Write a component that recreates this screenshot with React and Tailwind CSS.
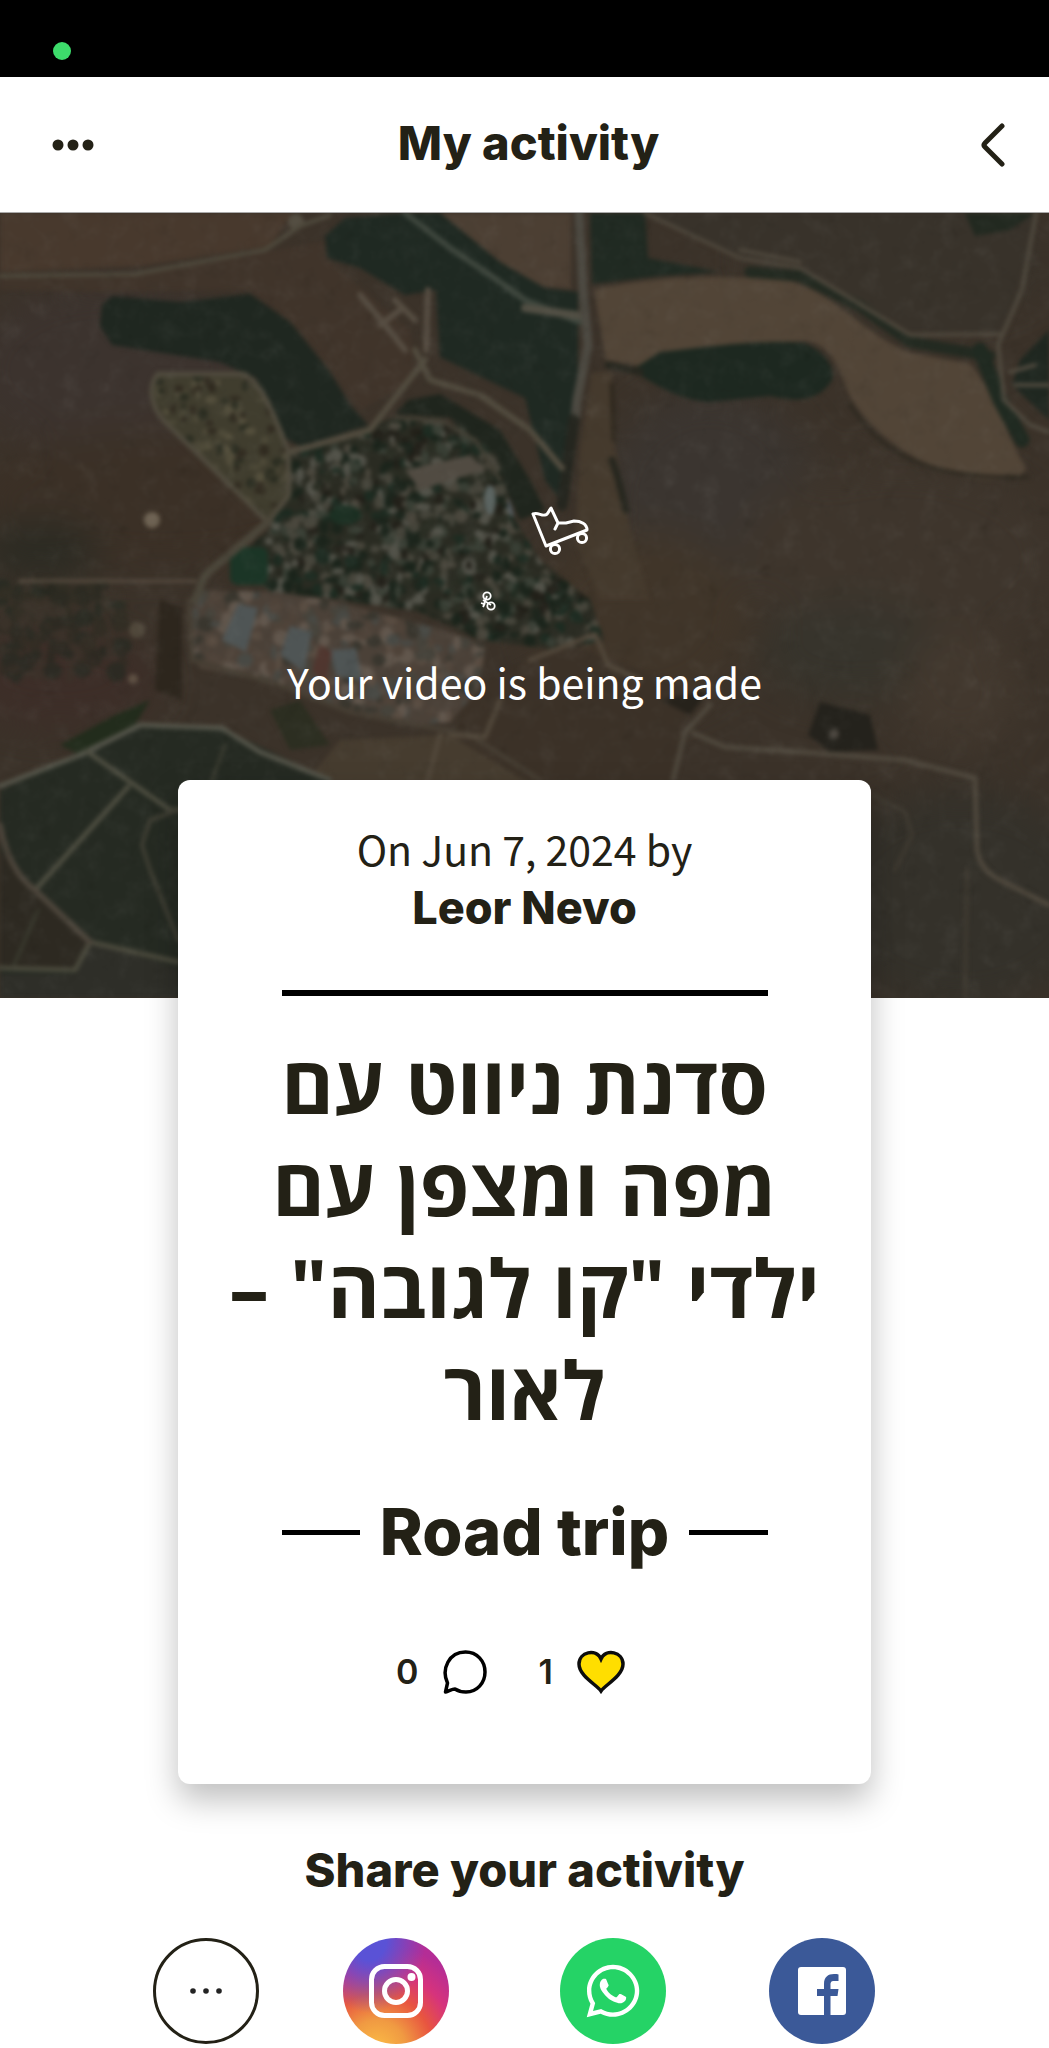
import { FaWhatsapp } from 'react-icons/fa'

// small seeded generator so the rooftops stay put between renders
function makeRandom(seed) {
  let s = seed
  return () => {
    s = (s * 16807) % 2147483647
    return s / 2147483647
  }
}

function scatter(seed, count, box, colors, size) {
  const rnd = makeRandom(seed)
  return Array.from({ length: count }, () => ({
    x: Math.round(box[0] + rnd() * box[2]),
    y: Math.round(box[1] + rnd() * box[3]),
    rx: Math.round(size * (0.5 + rnd())),
    ry: Math.round(size * (0.5 + rnd())),
    fill: colors[Math.floor(rnd() * colors.length)],
  }))
}

const town = ['#19241b', '#19241b', '#1c2c21', '#211f18', '#2b2e24', '#4c4a40', '#514d42', '#3c4439', '#5b5b52']
const houses = scatter(77, 1500, [230, 415, 370, 230], town, 5)
const suburb = scatter(12, 190, [150, 375, 145, 150], ['#2a2c21', '#302a20', '#57513f', '#4f4b3a'], 4)
const works = scatter(31, 330, [190, 590, 300, 140], ['#5e5045', '#51443a', '#484b48', '#35342c', '#675c52', '#45443c'], 6)
const farm = scatter(9, 160, [0, 585, 125, 90], ['#23271e', '#2c2c22', '#3b342a', '#1f2820'], 7)

function Dots({ items, opacity = 1 }) {
  return (
    <g opacity={opacity}>
      {items.map((d, i) => <ellipse key={i} cx={d.x} cy={d.y} rx={d.rx} ry={d.ry} fill={d.fill} />)}
    </g>
  )
}

function SatelliteMap() {
  return (
    <svg className="absolute inset-0 h-full w-full" viewBox="0 213 1049 785" preserveAspectRatio="xMidYMid slice" aria-hidden="true">
      <defs>
        <filter id="soft" x="-5%" y="-5%" width="110%" height="110%" colorInterpolationFilters="sRGB"><feGaussianBlur stdDeviation="2" /></filter>
        <filter id="haze" x="-10%" y="-10%" width="120%" height="120%" colorInterpolationFilters="sRGB"><feGaussianBlur stdDeviation="18" /></filter>
        <filter id="grain" x="0" y="0" width="100%" height="100%" colorInterpolationFilters="sRGB">
          <feTurbulence type="fractalNoise" baseFrequency="0.05" numOctaves="3" seed="4" />
          <feColorMatrix values="0.9 0 0 0 -0.1  0.9 0 0 0 -0.1  0.9 0 0 0 -0.12  0 2.4 0 0 -0.9" />
        </filter>
        <clipPath id="townClip"><path d="M290 448L330 440 380 422 402 416 460 425 497 455 515 520 540 560 590 600 604 640 560 650 480 640 420 612 330 598 270 592 235 560 268 530 290 490Z" /></clipPath>
        <clipPath id="suburbClip"><path d="M158 374H244C262 384 272 410 288 450L289 495 268 522 230 482 165 422C150 405 148 386 158 374Z" /></clipPath>
        <clipPath id="worksClip"><path d="M195 590L275 592 330 600 450 632 486 645 478 690 450 722 400 726 330 706 260 680 200 668 190 650Z" /></clipPath>
      </defs>
      <rect y="213" width="1049" height="785" fill="#3b3229" />
      <g filter="url(#haze)">
        <ellipse cx="110" cy="370" rx="140" ry="90" fill="#3c332e" />
        <ellipse cx="160" cy="500" rx="190" ry="70" fill="#3b3026" />
        <ellipse cx="710" cy="500" rx="110" ry="110" fill="#3b3530" />
        <ellipse cx="640" cy="620" rx="110" ry="90" fill="#403529" />
        <ellipse cx="900" cy="560" rx="160" ry="100" fill="#3e352c" />
        <ellipse cx="850" cy="650" rx="90" ry="50" fill="#37342c" />
        <ellipse cx="960" cy="690" rx="60" ry="60" fill="#42382e" />
        <ellipse cx="900" cy="260" rx="150" ry="60" fill="#38322a" />
        <ellipse cx="60" cy="680" rx="100" ry="50" fill="#3d2e28" />
        <ellipse cx="960" cy="900" rx="140" ry="110" fill="#34312a" />
        <ellipse cx="40" cy="550" rx="60" ry="30" fill="#2c2b23" />
      </g>
      <g filter="url(#soft)" fill="none" strokeLinejoin="round" strokeLinecap="round">
        {/* fields */}
        <path d="M0 213H292L270 246 140 266 0 272Z" fill="#48392d" />
        <path d="M0 276L135 274 265 252 330 240 330 262 410 330 415 380 360 410 300 330 250 290 100 292 0 290Z" fill="#40342a" />
        <path d="M440 213H571V289L540 286 500 262Z" fill="#4c3f33" />
        <path d="M645 213H1035L1015 300 1000 332 910 332 850 296 800 266 740 256Z" fill="#38322a" />
        <path d="M594 290Q680 270 790 281C840 296 870 340 912 353L970 364C1000 400 1008 440 1026 468C1022 482 980 482 960 475C900 460 862 420 848 392C836 358 828 345 806 341L730 344 640 366 606 360Z" fill="#524537" />
        <path d="M592 372L612 372 614 440 630 530 650 600 600 600 575 540 580 450Z" fill="#453a2d" />
        <path d="M470 690L560 640 690 690 670 790H430Z" fill="#3b3127" />
        <path d="M340 740L450 735 540 790H300Z" fill="#463c2f" />

        {/* woods */}
        <path d="M102 305L112 296 180 302 250 294 290 322 330 372 350 405 368 425 322 440 300 446 284 438 256 378 220 362 112 345 100 326Z" fill="#1f2720" />
        <path d="M325 236L345 218 405 213 440 213 500 262 545 288 578 292V425L564 505 545 480 525 398 440 357 436 290 405 295 360 268 327 258Z" fill="#1f2922" />
        <path d="M408 400L440 394 500 430 530 480 545 510 520 520 490 455 450 418 395 414Z" fill="#1f251d" />
        <path d="M590 213H645L648 258 720 272 660 276 592 284Z" fill="#202a22" />
        <path d="M965 213H1035L1010 230 975 236Z" fill="#222920" />
        <path d="M632 370L660 352C720 345 760 340 804 343C822 350 836 366 832 380C820 400 800 403 770 396L710 402C680 400 660 388 632 370Z" fill="#1d2820" />
        <path d="M750 272L800 276 860 306 910 342 990 356" stroke="#232a21" strokeWidth="11" />
        <path d="M980 350L1000 400 1022 440" stroke="#202a21" strokeWidth="15" />
        <path d="M1049 330L1020 360 1012 385 1049 420Z" fill="#1f2720" />
        <path d="M608 365L640 372M612 460L618 478 626 510" stroke="#27271f" strokeWidth="7" />
        <path d="M612 385L614 440" stroke="#30291f" strokeWidth="5" />
        <path d="M850 405C880 450 920 480 1028 477" stroke="#2f2a21" strokeWidth="4" />
        <path d="M60 745L115 715 150 700 135 725 80 755Z" fill="#222c1c" />
        <path d="M0 790L88 752 145 724 222 728 330 780 330 998 0 998Z" fill="#252a22" />
        <path d="M0 850L35 892 90 942 75 968 0 970Z" fill="#2d2921" />
        <path d="M0 974H75L92 942 178 968V998H0Z" fill="#2e2e28" />
        <path d="M808 735L820 702 870 715 878 750 830 752Z" fill="#24221c" />
        <path d="M660 700L710 690 690 715Z" fill="#26221b" />
        <path d="M270 710L300 700 330 745 290 750Z" fill="#2c2e21" />

        {/* built-up areas */}
        <path d="M158 374H244C262 384 272 410 288 450L289 495 268 522 230 482 165 422C150 405 148 386 158 374Z" fill="#403d2e" />
        <g clipPath="url(#suburbClip)"><Dots items={suburb} opacity={0.9} /></g>
        <g clipPath="url(#townClip)">
          <rect x="230" y="410" width="380" height="245" fill="#2a2b22" />
          <Dots items={houses} opacity={0.85} />
          <path d="M405 470L470 455 485 470 420 490Z" fill="#514b42" />
          <ellipse cx="490" cy="500" rx="6" ry="15" fill="#5b6461" />
          <ellipse cx="515" cy="505" rx="7" ry="12" fill="#525d64" />
          <ellipse cx="345" cy="515" rx="16" ry="10" fill="#1c3023" />
        </g>
        <g clipPath="url(#worksClip)">
          <rect x="185" y="585" width="310" height="150" fill="#4b4138" />
          <Dots items={works} opacity={0.8} />
          <path d="M222 640L238 604 258 608 246 652ZM280 655L290 626 312 632 304 672ZM330 650L356 648 362 680 336 676Z" fill="#4f5555" />
          <path d="M312 670L320 645 332 652 326 685Z" fill="#50362f" />
        </g>
        <Dots items={farm} opacity={0.55} />
        <rect x="230" y="547" width="38" height="38" rx="8" fill="#1b3526" />
        <path d="M160 600L182 608 182 700 155 690Z" fill="#2d261d" />
        <circle cx="152" cy="520" r="8" fill="#6e6252" />
        <circle cx="137" cy="630" r="8" fill="#51483b" />
        <circle cx="133" cy="679" r="5" fill="#5e5043" />
        <circle cx="296" cy="222" r="8" fill="#544e42" />
        <circle cx="834" cy="734" r="5" fill="#4a453e" />
        <path d="M360 295L385 325 405 350M395 300L415 320M380 325L400 310M428 290L426 350" stroke="#564d42" strokeWidth="6" />

        {/* tracks and roads */}
        <path d="M0 276L135 274 265 250 300 226 330 215" stroke="#4f4a3d" strokeWidth="4" />
        <path d="M405 213L450 248 490 275 525 300 580 322" stroke="#3e463d" strokeWidth="6" />
        <path d="M525 308L582 316" stroke="#524f44" strokeWidth="8" />
        <path d="M579 213L583 290 588 345 577 400 574 430" stroke="#4d4a42" strokeWidth="9" />
        <path d="M574 420L562 505" stroke="#25261f" strokeWidth="11" />
        <path d="M645 213L740 258 800 268 850 298 910 335 1000 334M740 250L800 262" stroke="#4e473c" strokeWidth="4" />
        <path d="M1036 213L1022 290 998 345 1004 400 1030 425 1049 432M1010 372L1035 365M1015 385H1049" stroke="#504a3f" strokeWidth="4" />
        <path d="M425 360L405 385 370 430 290 452M415 350L430 380 480 395 530 430 562 468" stroke="#524c3f" strokeWidth="6" />
        <path d="M395 418L440 420 475 440 500 480" stroke="#423f34" strokeWidth="4" />
        <path d="M158 374H244C262 384 272 410 288 450L289 495 268 522 165 422C150 405 148 386 158 374Z" stroke="#504b3e" strokeWidth="5" />
        <path d="M268 522L205 575 195 600" stroke="#4b463a" strokeWidth="8" />
        <path d="M20 581H195" stroke="#51473b" strokeWidth="4" />
        <path d="M189 600L192 660 270 682 350 712 470 735 540 780" stroke="#463e33" strokeWidth="5" />
        <path d="M530 660L595 634 608 665 640 680M440 735L425 790M450 735L485 737 500 700" stroke="#51473a" strokeWidth="5" />
        <path d="M0 786L80 755 140 725 222 728 260 752 330 780" stroke="#55554a" strokeWidth="5" />
        <path d="M88 752L170 810H180M128 787L35 890" stroke="#4c4c3f" strokeWidth="5" />
        <path d="M90 942L75 970 0 968M90 942L178 962" stroke="#4a493c" strokeWidth="5" />
        <path d="M225 745L212 780M38 910L14 965" stroke="#3b3c30" strokeWidth="3" />
        <path d="M0 825Q8 870 35 890L90 942" stroke="#4b443a" strokeWidth="6" />
        <path d="M178 810L150 820 142 845 150 870 178 940" stroke="#403f34" strokeWidth="4" />
        <path d="M673 780L685 732 710 705M693 733L725 747 800 752 905 760 975 778 977 850Q980 870 1000 880L1049 905" stroke="#4f483d" strokeWidth="5" />
        <path d="M873 795L905 812 912 835 895 870M967 870L965 998" stroke="#3f3a31" strokeWidth="4" />
      </g>
      <rect y="213" width="1049" height="785" filter="url(#grain)" opacity="0.08" />

      {/* roller boot */}
      <g fill="none" stroke="#fff" strokeWidth="3" strokeLinecap="round" strokeLinejoin="round">
        <path d="M533 514L546 546 587 530C587 524 581 521 574 521L566 523H558L551 508C549 510 548 515 545 515C541 516 538 512 533 514ZM558 523L555 529" />
        <circle cx="555" cy="549" r="4.6" />
        <circle cx="582" cy="538" r="4.6" />
      </g>
      {/* tiny bike */}
      <g fill="none" stroke="#fff" strokeWidth="1.8">
        <circle cx="487" cy="596" r="3.7" />
        <circle cx="491" cy="606" r="3.7" />
        <path d="M483 600L491 605M487 596L484 604 481 603M483 607L485 603" />
      </g>
    </svg>
  )
}

function CommentIcon() {
  return (
    <svg className="size-11" viewBox="0 0 44 44" fill="none" stroke="#000" strokeWidth="3.500" strokeLinejoin="round" aria-hidden="true">
      <path d="M2.500 42L4.500 33C-2 19 6 2 22.500 2C34 2 42 11 42 22C42 33 34 42 23 42C18 42 15 41 12 39C9 39 6 41 2.500 42Z" />
    </svg>
  )
}

function HeartIcon() {
  return (
    <svg className="h-11 w-12" viewBox="0 0 48 44" fill="#ffde00" stroke="#0d0d0d" strokeWidth="3.500" aria-hidden="true">
      <path d="M24 41C20 35 2 26 2 14C2 2 19-2 24 9C29-2 46 2 46 14C46 26 28 35 24 41Z" />
    </svg>
  )
}

function InstagramIcon() {
  return (
    <svg className="size-[54px]" viewBox="0 0 54 54" fill="none" stroke="#fff" strokeWidth="5" aria-hidden="true">
      <rect x="2.500" y="2.500" width="49" height="49" rx="13" />
      <circle cx="27" cy="27" r="11.500" />
      <circle cx="42.500" cy="13" r="4" fill="#fff" stroke="none" />
    </svg>
  )
}

function FacebookIcon() {
  return (
    <svg className="size-12" viewBox="0 0 48 48" aria-hidden="true">
      <rect width="48" height="48" rx="3" fill="#fff" />
      <path d="M26 48V29H19V22H26V17C26 10 30 7 36 7C38 7 39.500 7 40.500 7.500V14H36C33 14 32.500 15.500 32.500 18V22H40.500L39.500 29H32.500V48Z" fill="#3b5998" />
    </svg>
  )
}

const SHARES = [
  { name: 'More options', style: 'border-3 border-[#232116]', icon: <svg className="h-2 w-8" viewBox="0 0 32 8" fill="#232323" aria-hidden="true"><circle cx="3" cy="4" r="2.800" /><circle cx="16" cy="4" r="2.800" /><circle cx="29" cy="4" r="2.800" /></svg> },
  { name: 'Instagram', style: 'bg-[radial-gradient(ellipse_at_25%_0%,#5a52d6_15%,transparent_50%),radial-gradient(circle_at_32%_105%,#f9b545_5%,#f09a42_22%,#e8553f_42%,#d6337c_60%,#b42d96_80%)]', icon: <InstagramIcon /> },
  { name: 'WhatsApp', style: 'bg-[#25d366]', icon: <FaWhatsapp className="size-[60px] text-white" aria-hidden="true" /> },
  { name: 'Facebook', style: 'bg-[#3b5998]', icon: <FacebookIcon /> },
]

export default function App() {
  return (
    <div className="min-h-screen bg-white font-['Inter',sans-serif] text-[#232116]">
      <div className="flex h-[77px] items-center bg-black px-[53px] pt-6">
        <span className="size-[18px] rounded-full bg-[#3ddc6b]" />
      </div>

      <header className="flex h-[136px] items-center border-b border-[#aaa] px-11">
        <div className="flex flex-1 pl-2">
          <button aria-label="Menu" className="w-[42px]">
            <svg viewBox="0 0 42 12" fill="currentColor" aria-hidden="true"><circle cx="6" cy="6" r="5.500" /><circle cx="21" cy="6" r="5.500" /><circle cx="36" cy="6" r="5.500" /></svg>
          </button>
        </div>
        <h1 className="pb-1 text-[47px] leading-[60px] font-extrabold">My activity</h1>
        <div className="flex flex-1 justify-end">
          <button aria-label="Back">
            <svg className="h-11 w-6" viewBox="0 0 24 44" fill="none" stroke="currentColor" strokeWidth="5" strokeLinecap="round" strokeLinejoin="round" aria-hidden="true"><path d="M21 3L4 20Q2 22 4 24L21 41" /></svg>
          </button>
        </div>
      </header>

      <section className="relative flex flex-col items-center pt-[438px] pb-[287px]">
        <SatelliteMap />
        <p className="relative font-['Noto_Sans_CJK_SC',sans-serif] text-[41px] leading-[60px] text-white">Your video is being made</p>
      </section>

      <main className="relative mx-[17%] -mt-[218px] flex flex-col items-center rounded-xl bg-white px-12 pt-[38px] pb-[90px] shadow-[0_16px_32px_rgba(0,0,0,0.25)]">
        <p className="text-center font-['Noto_Sans_CJK_SC',sans-serif] text-[41px] leading-[60px]">On Jun 7, 2024 by</p>
        <a href="#leor" className="text-[45px] leading-[60px] font-extrabold">Leor Nevo</a>
        <hr className="mt-[52px] w-[486px] border-t-6 border-black" />
        <h2 dir="rtl" lang="he" className="mt-9 text-center font-['Open_Sans',sans-serif] text-[80px] leading-[102px] font-bold">
          סדנת ניווט עם מפה ומצפן עם ילדי "קו לגובה" – לאור
        </h2>
        <div className="mt-[52px] flex w-[486px] items-center gap-5">
          <span className="h-[5px] flex-1 bg-black" />
          <h3 className="text-[65px] leading-[80px] font-extrabold">Road trip</h3>
          <span className="h-[5px] flex-1 bg-black" />
        </div>
        <div className="mt-[78px] flex items-center gap-[52px] pr-7 text-[34px] leading-[44px] font-semibold">
          <button aria-label="Comments" className="flex items-center gap-6">0 <CommentIcon /></button>
          <button aria-label="Likes" className="flex items-center gap-6">1 <HeartIcon /></button>
        </div>
      </main>

      <footer className="flex flex-col items-center pt-14 pb-1">
        <h2 className="text-[47px] leading-[60px] font-extrabold">Share your activity</h2>
        <div className="mt-[38px] grid grid-cols-[160px_220px_214px_204px] justify-items-center">
          {SHARES.map(s => (
            <button key={s.name} aria-label={s.name} className={`flex size-[106px] items-center justify-center rounded-full ${s.style}`}>
              {s.icon}
            </button>
          ))}
        </div>
      </footer>
    </div>
  )
}
